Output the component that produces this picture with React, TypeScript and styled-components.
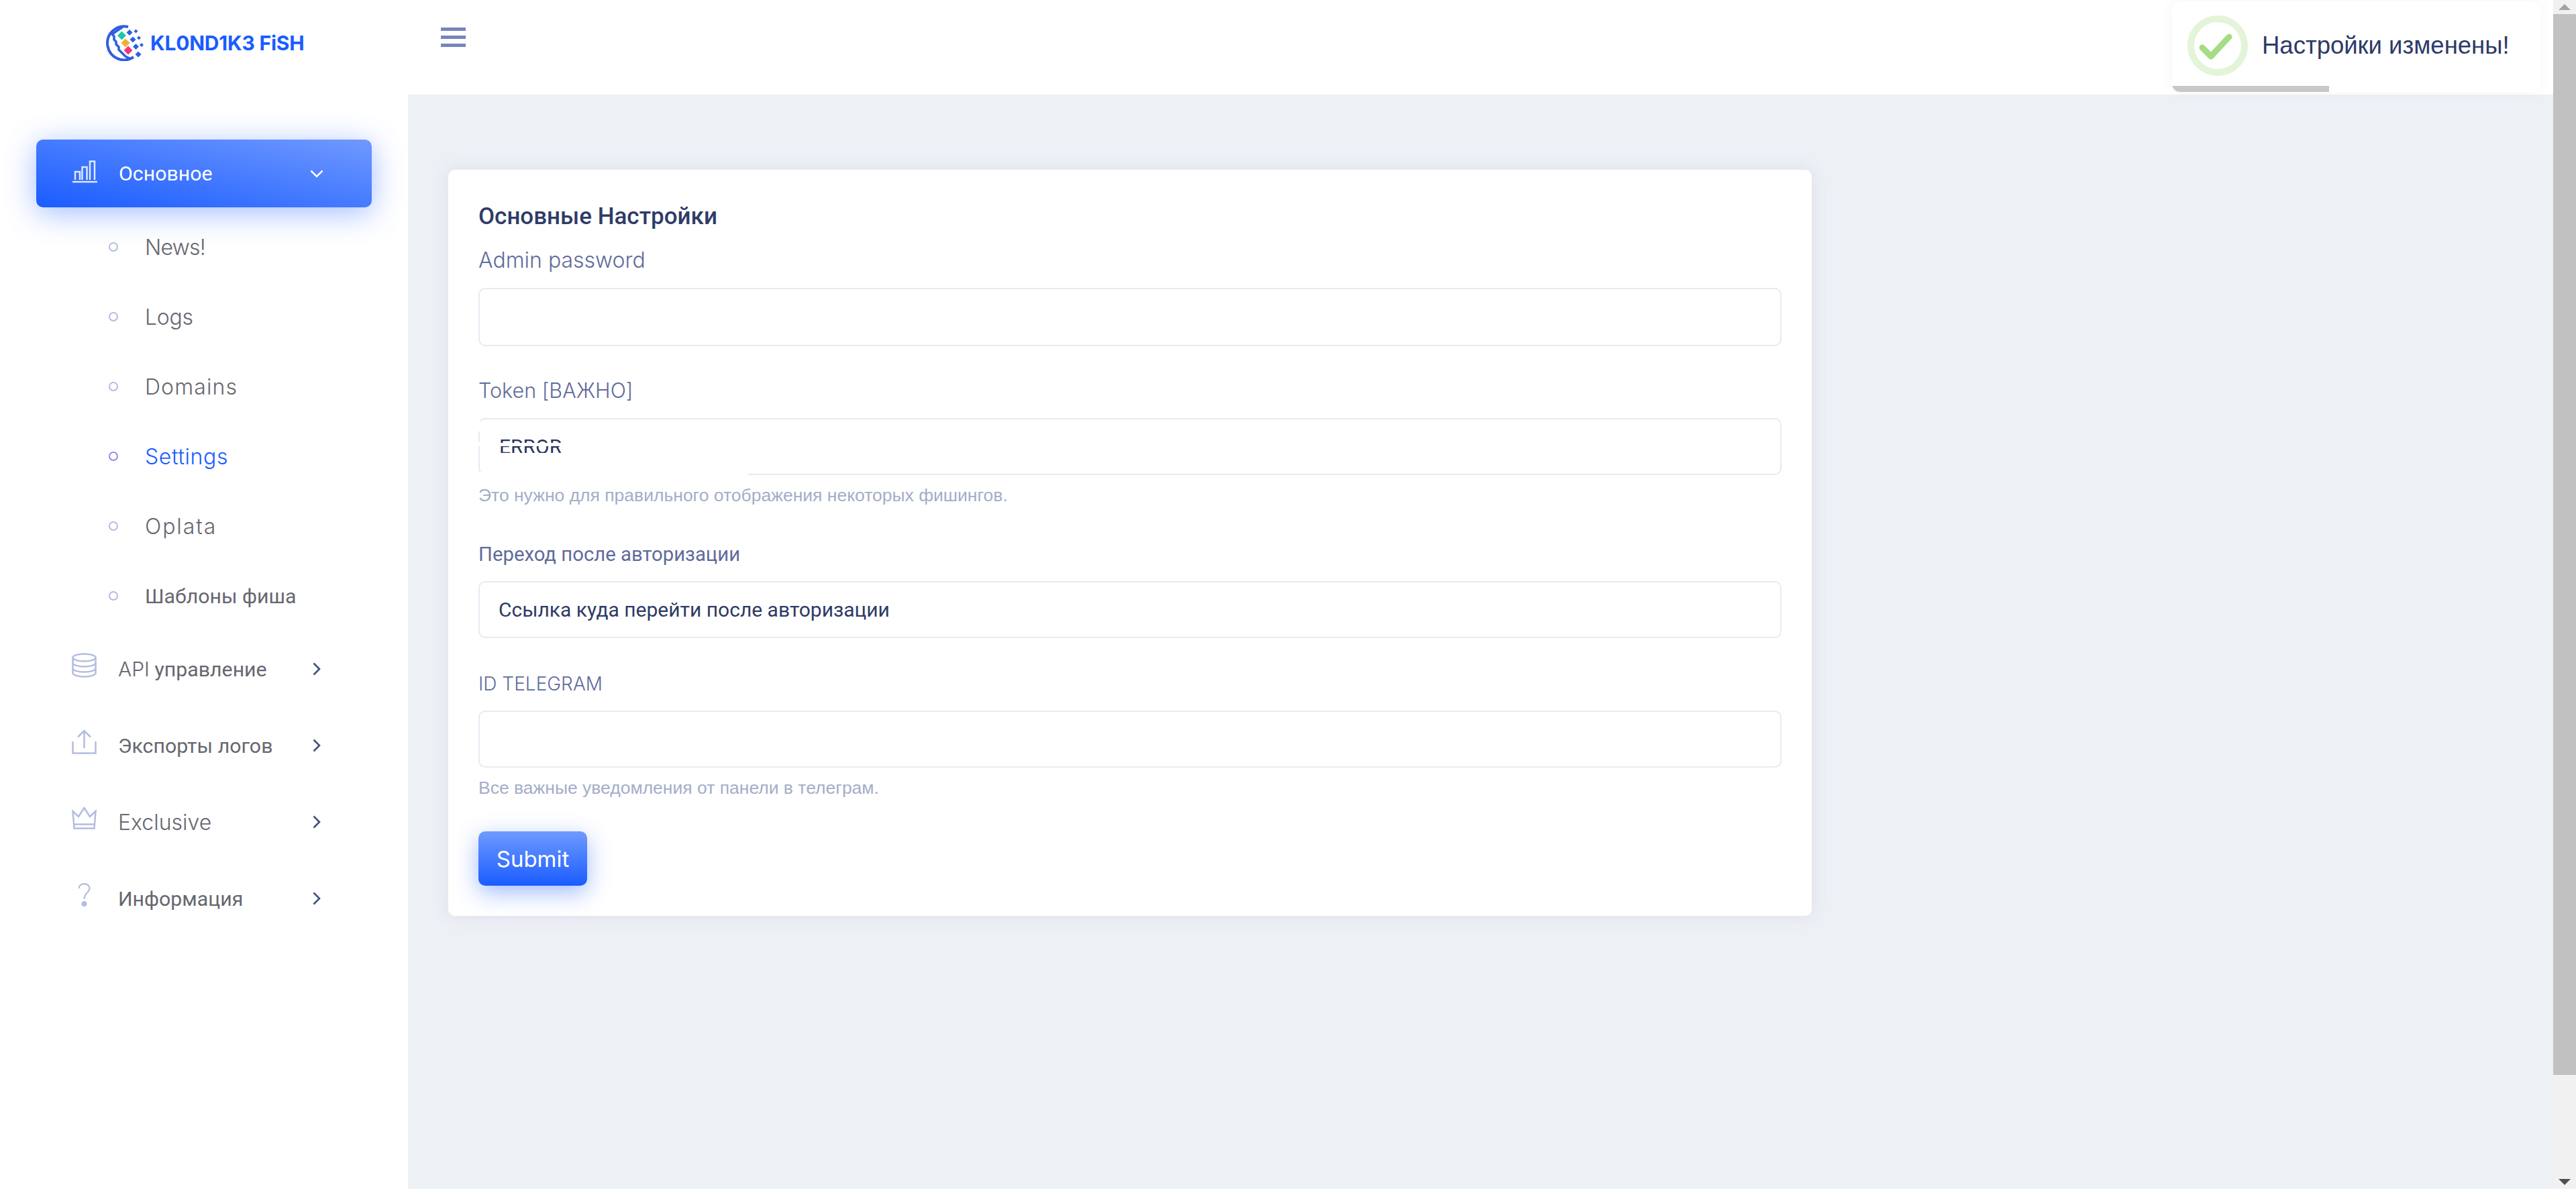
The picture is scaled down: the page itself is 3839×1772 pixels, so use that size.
import React from 'react';
import styled, { createGlobalStyle } from 'styled-components';

const GlobalStyle = createGlobalStyle`
  html, body {
    margin: 0;
    padding: 0;
    overflow: hidden;
    background: #ffffff;
  }
  * {
    box-sizing: border-box;
  }
`;

const cyrillic = `Roboto, "Liberation Sans", sans-serif`;
const latin = `Inter, "Open Sans", sans-serif`;

const Page = styled.div`
  display: flex;
  width: 3839px;
  height: 1772px;
  font-family: ${cyrillic};
`;

const Sidebar = styled.aside`
  width: 608px;
  flex-shrink: 0;
  background: #ffffff;
`;

const LogoRow = styled.div`
  height: 141px;
  padding: 37px 0 0 157px;
  display: flex;
  align-items: flex-start;
  gap: 9px;
`;

const LogoText = styled.span`
  font-family: ${latin};
  font-weight: 700;
  font-size: 30px;
  letter-spacing: -0.2px;
  line-height: 54px;
  color: #1a5cff;
  white-space: nowrap;
`;

const Nav = styled.nav`
  padding-top: 67px;
`;

const ActiveItem = styled.div`
  display: flex;
  align-items: center;
  height: 101px;
  margin: 0 54px;
  padding: 0 72px 0 54px;
  border-radius: 10px;
  color: #ffffff;
  background: linear-gradient(to top right, #1a5cff, #7099ff);
  box-shadow: 0 8px 45px rgba(32, 95, 255, 0.42);
`;

const NavItem = styled.div`
  display: flex;
  align-items: center;
  height: 114px;
  padding: 0 130px 0 107px;
  color: #666770;
`;

const IconSlot = styled.span`
  display: flex;
  width: 37px;
  justify-content: center;
  flex-shrink: 0;
  margin-right: 32px;
  transform: translateY(-6px);
  svg {
    display: block;
  }
`;

const ActiveIconSlot = styled(IconSlot)`
  transform: translateY(-3px);
`;

const NavLabel = styled.span`
  flex: 1;
  font-size: 30.3px;
  font-weight: 400;
  white-space: nowrap;
`;

const SubList = styled.div`
  margin-top: 7px;
`;

const SubItem = styled.div<{ $active?: boolean }>`
  display: flex;
  align-items: center;
  height: 104px;
  padding-left: 162px;
  color: ${(p) => (p.$active ? '#1a5cff' : '#666770')};
`;

const SubDot = styled.span<{ $active?: boolean }>`
  width: 14px;
  height: 14px;
  margin-right: 40px;
  border-radius: 50%;
  border: 2px solid ${(p) => (p.$active ? '#8f8bf0' : '#b4bde0')};
`;

const SubLabel = styled.span<{ $latin?: boolean; $track?: number }>`
  font-family: ${(p) => (p.$latin ? latin : cyrillic)};
  font-size: ${(p) => (p.$latin ? '32px' : '30.3px')};
  font-weight: ${(p) => (p.$latin ? 300 : 400)};
  letter-spacing: ${(p) => p.$track ?? 0}px;
  white-space: nowrap;
`;

const Latin = styled.span<{ $size?: number }>`
  font-family: ${latin};
  font-size: ${(p) => p.$size ?? 32}px;
  font-weight: 300;
`;

const Main = styled.main`
  position: relative;
  flex: 1;
  display: flex;
  flex-direction: column;
  background: #edf0f5;
`;

const Header = styled.header`
  height: 141px;
  flex-shrink: 0;
  padding: 41px 0 0 49px;
  background: #ffffff;
`;

const Burger = styled.div`
  display: flex;
  flex-direction: column;
  gap: 7px;
  width: 37px;
`;

const BurgerBar = styled.span`
  height: 5px;
  background: #7585bd;
`;

const Content = styled.div`
  padding: 112px 0 0 60px;
`;

const Card = styled.section`
  width: 2032px;
  height: 1112px;
  padding: 45px 45px 0;
  background: #ffffff;
  border-radius: 10px;
  box-shadow: 0 0 25px rgba(120, 130, 170, 0.14);
`;

const CardTitle = styled.h2`
  margin: 0 0 20px;
  font-size: 35px;
  line-height: 50px;
  font-weight: 500;
  color: #2f3c68;
`;

const Group = styled.div<{ $gap?: number }>`
  padding-bottom: ${(p) => p.$gap ?? 48}px;
`;

const Label = styled.label`
  display: block;
  margin-bottom: 20px;
  font-size: 29.3px;
  line-height: 40px;
  font-weight: 400;
  color: #5f6b9b;
`;

const Input = styled.input<{ $short?: boolean }>`
  display: block;
  width: 100%;
  height: ${(p) => (p.$short ? '85px' : '87px')};
  padding: 0 28px;
  border: 2px solid #e7eaf3;
  border-radius: 10px;
  outline: none;
  background: #ffffff;
  font-family: ${cyrillic};
  font-size: 30px;
  color: #2e3b66;
`;

const TokenField = styled.div`
  position: relative;
  height: 85px;
  border: 2px solid #e7eaf3;
  border-radius: 10px;
`;

const TokenText = styled.div`
  position: absolute;
  left: 29px;
  top: 30px;
  height: 20px;
  overflow: hidden;
  font-family: ${cyrillic};
  font-size: 30px;
  line-height: 22px;
  color: #27345f;
`;

const TokenSlice = styled.span`
  position: absolute;
  left: 29px;
  top: 35px;
  width: 100px;
  height: 5px;
  background: #ffffff;
`;

const TokenMask = styled.span`
  position: absolute;
  left: -2px;
  bottom: -2px;
  width: 402px;
  height: 4px;
  background: #ffffff;
`;

const BorderGap = styled.span<{ $top: number; $height: number }>`
  position: absolute;
  left: -2px;
  top: ${(p) => p.$top}px;
  width: 3px;
  height: ${(p) => p.$height}px;
  background: #ffffff;
`;

const Help = styled.small`
  display: block;
  margin: 15px 0 5px;
  font-family: 'Liberation Sans', sans-serif;
  font-size: 26.5px;
  line-height: 30px;
  color: #a4adc8;
`;

const SubmitButton = styled.button`
  display: block;
  width: 162px;
  height: 81px;
  margin-top: -3px;
  border: none;
  border-radius: 10px;
  font-family: ${latin};
  font-weight: 400;
  font-size: 33px;
  color: #ffffff;
  background: linear-gradient(to top, #1a5cff, #6f9aff);
  box-shadow: 0 10px 34px rgba(32, 95, 255, 0.42);
`;

const Toast = styled.div`
  position: absolute;
  top: 2px;
  right: 19px;
  width: 549px;
  height: 135px;
  display: flex;
  align-items: center;
  padding: 0 0 3px 23px;
  gap: 21px;
  overflow: hidden;
  border-radius: 12px;
  background: #ffffff;
  box-shadow: 0 0 18px rgba(120, 130, 170, 0.07);
`;

const ToastText = styled.span`
  font-family: 'Liberation Sans', sans-serif;
  font-size: 36.5px;
  color: #2c3a68;
  white-space: nowrap;
`;

const ToastProgress = styled.span`
  position: absolute;
  left: 0;
  bottom: 0;
  height: 9px;
  background: #c8c8c8;
`;

const ScrollBar = styled.div`
  width: 34px;
  flex-shrink: 0;
  display: flex;
  flex-direction: column;
  background: #f1f1f1;
`;

const ScrollButton = styled.div`
  height: 21px;
  flex-shrink: 0;
  display: flex;
  justify-content: center;
  align-items: center;
`;

const ArrowUp = styled.span`
  width: 0;
  height: 0;
  border-left: 9px solid transparent;
  border-right: 9px solid transparent;
  border-bottom: 9px solid #a3a3a3;
`;

const ArrowDown = styled.span`
  width: 0;
  height: 0;
  border-left: 9px solid transparent;
  border-right: 9px solid transparent;
  border-top: 9px solid #505050;
`;

const ScrollThumb = styled.div`
  height: 1581px;
  flex-shrink: 0;
  background: #c1c1c1;
`;

const ScrollRest = styled.div`
  flex: 1;
`;

const logoBlue = '#2f5fe0';

const diamond = (x: number, y: number, r: number) =>
  `M${x} ${y - r} L${x + r} ${y} L${x} ${y + r} L${x - r} ${y} Z`;

const LogoIcon = () => (
  <svg width="58" height="54" viewBox="0 0 58 54">
    <path d="M34 3 A25 25 0 1 0 42 48" fill="none" stroke={logoBlue} strokeWidth="4" />
    <path
      d="M26 3 L10 14 L13 17 L13 22 L16 25 L16 29 L20 33 L20 37 L25 42 L30 47 L38 51"
      fill="none"
      stroke={logoBlue}
      strokeWidth="3.5"
    />
    <path d={diamond(24.5, 16, 6.5)} fill="#1dc6a8" />
    <path d={diamond(30, 27, 6.5)} fill="#f2ae2f" />
    <path d={diamond(34, 38, 6.5)} fill="#f0357f" />
    <path d={diamond(36, 11.5, 4.5)} fill={logoBlue} />
    <path d={diamond(41, 22, 4.5)} fill={logoBlue} />
    <path d={diamond(45.5, 32.5, 4.5)} fill={logoBlue} />
    <path d={diamond(49, 44, 4.5)} fill={logoBlue} />
    <path d={diamond(45.5, 9.5, 3)} fill={logoBlue} />
    <path d={diamond(50, 19.5, 3)} fill={logoBlue} />
    <path d={diamond(54, 30, 3)} fill={logoBlue} />
  </svg>
);

const stroke = '#b4bde0';

const ChartIcon = () => (
  <svg width="37" height="34" viewBox="0 0 37 34" fill="none" stroke="#dfe8ff" strokeWidth="2.5">
    <path d="M0 32 H37" />
    <path d="M4 29 V17 H11 V29" />
    <path d="M14.5 29 V10 H21.5 V29" />
    <path d="M26 29 V1.5 H33 V29" />
  </svg>
);

const DatabaseIcon = () => (
  <svg width="37" height="37" viewBox="0 0 37 37" fill="none" stroke={stroke} strokeWidth="2.5">
    <ellipse cx="18.5" cy="7" rx="17" ry="5.5" />
    <path d="M1.5 7 V30 C1.5 33 9 35.5 18.5 35.5 C28 35.5 35.5 33 35.5 30 V7" />
    <path d="M1.5 15 C1.5 18 9 20.5 18.5 20.5 C28 20.5 35.5 18 35.5 15" />
    <path d="M1.5 23 C1.5 26 9 28.5 18.5 28.5 C28 28.5 35.5 26 35.5 23" />
  </svg>
);

const UploadIcon = () => (
  <svg width="37" height="37" viewBox="0 0 37 37" fill="none" stroke={stroke} strokeWidth="2.5">
    <path d="M1.5 18 V35.5 H35.5 V18" />
    <path d="M18.5 2 V28" />
    <path d="M9 11.5 L18.5 2 L28 11.5" />
  </svg>
);

const CrownIcon = () => (
  <svg width="37" height="34" viewBox="0 0 37 34" fill="none" stroke={stroke} strokeWidth="2.5">
    <path d="M1.5 7 L10 15 L18.5 2 L27 15 L35.5 7 L33.5 32.5 H3.5 Z" />
    <path d="M3 26.5 H34" />
  </svg>
);

const QuestionIcon = () => (
  <svg width="37" height="35" viewBox="0 0 37 35">
    <path
      d="M10.5 8 C10.5 4 14 1.2 18.5 1.2 C23 1.2 26.5 4 26.5 8 C26.5 13.5 18.5 15 18.5 24"
      fill="none"
      stroke={stroke}
      strokeWidth="2.2"
    />
    <circle cx="18.5" cy="31" r="4" fill={stroke} />
  </svg>
);

const ChevronRight = () => (
  <svg width="12" height="20" viewBox="0 0 12 20" fill="none" stroke="#444f7a" strokeWidth="2.6">
    <path d="M1.5 1.5 L10 10 L1.5 18.5" />
  </svg>
);

const ChevronDown = () => (
  <svg width="20" height="12" viewBox="0 0 20 12" fill="none" stroke="#ffffff" strokeWidth="2.6">
    <path d="M1.5 1.5 L10 10 L18.5 1.5" />
  </svg>
);

const CheckIcon = () => (
  <svg width="90" height="90" viewBox="0 0 90 90" fill="none">
    <circle cx="45" cy="45" r="40" stroke="#e3f4d9" strokeWidth="10" />
    <path d="M22 48 L35 61 L62 32" stroke="#a5dc86" strokeWidth="9" strokeLinecap="round" strokeLinejoin="round" />
  </svg>
);

const subItems = [
  { label: 'News!', latin: true, track: -0.8 },
  { label: 'Logs', latin: true, track: -0.3 },
  { label: 'Domains', latin: true, track: 1.1 },
  { label: 'Settings', latin: true, active: true, track: 0.6 },
  { label: 'Oplata', latin: true, track: 1.9 },
  { label: 'Шаблоны фиша' },
];

const App: React.FC = () => {
  const progress = 234;

  return (
    <Page>
      <GlobalStyle />
      <Sidebar>
        <LogoRow>
          <LogoIcon />
          <LogoText>KL0ND1K3 FiSH</LogoText>
        </LogoRow>
        <Nav>
          <ActiveItem>
            <ActiveIconSlot>
              <ChartIcon />
            </ActiveIconSlot>
            <NavLabel>Основное</NavLabel>
            <ChevronDown />
          </ActiveItem>
          <SubList>
            {subItems.map((item) => (
              <SubItem key={item.label} $active={item.active}>
                <SubDot $active={item.active} />
                <SubLabel $latin={item.latin} $track={item.track}>
                  {item.label}
                </SubLabel>
              </SubItem>
            ))}
          </SubList>
          <NavItem>
            <IconSlot>
              <DatabaseIcon />
            </IconSlot>
            <NavLabel>
              <Latin $size={30}>API</Latin> управление
            </NavLabel>
            <ChevronRight />
          </NavItem>
          <NavItem>
            <IconSlot>
              <UploadIcon />
            </IconSlot>
            <NavLabel>Экспорты логов</NavLabel>
            <ChevronRight />
          </NavItem>
          <NavItem>
            <IconSlot>
              <CrownIcon />
            </IconSlot>
            <NavLabel>
              <Latin>Exclusive</Latin>
            </NavLabel>
            <ChevronRight />
          </NavItem>
          <NavItem>
            <IconSlot>
              <QuestionIcon />
            </IconSlot>
            <NavLabel>Информация</NavLabel>
            <ChevronRight />
          </NavItem>
        </Nav>
      </Sidebar>

      <Main>
        <Header>
          <Burger>
            <BurgerBar />
            <BurgerBar />
            <BurgerBar />
          </Burger>
        </Header>
        <Content>
          <Card>
            <CardTitle>Основные Настройки</CardTitle>
            <Group $gap={46}>
              <Label>
                <Latin>Admin password</Latin>
              </Label>
              <Input />
            </Group>
            <Group>
              <Label>
                <Latin $size={30.5}>Token [ВАЖНО]</Latin>
              </Label>
              <TokenField>
                <TokenText>ERROR</TokenText>
                <TokenSlice />
                <TokenMask />
                <BorderGap $top={3} $height={15} />
                <BorderGap $top={33} $height={7} />
              </TokenField>
              <Help>Это нужно для правильного отображения некоторых фишингов.</Help>
            </Group>
            <Group>
              <Label>Переход после авторизации</Label>
              <Input $short defaultValue="Ссылка куда перейти после авторизации" />
            </Group>
            <Group>
              <Label>
                <Latin $size={28}>ID TELEGRAM</Latin>
              </Label>
              <Input $short />
              <Help>Все важные уведомления от панели в телеграм.</Help>
            </Group>
            <SubmitButton>Submit</SubmitButton>
          </Card>
        </Content>
        <Toast>
          <CheckIcon />
          <ToastText>Настройки изменены!</ToastText>
          <ToastProgress style={{ width: progress }} />
        </Toast>
      </Main>

      <ScrollBar>
        <ScrollButton>
          <ArrowUp />
        </ScrollButton>
        <ScrollThumb />
        <ScrollRest />
        <ScrollButton>
          <ArrowDown />
        </ScrollButton>
      </ScrollBar>
    </Page>
  );
};

export default App;
